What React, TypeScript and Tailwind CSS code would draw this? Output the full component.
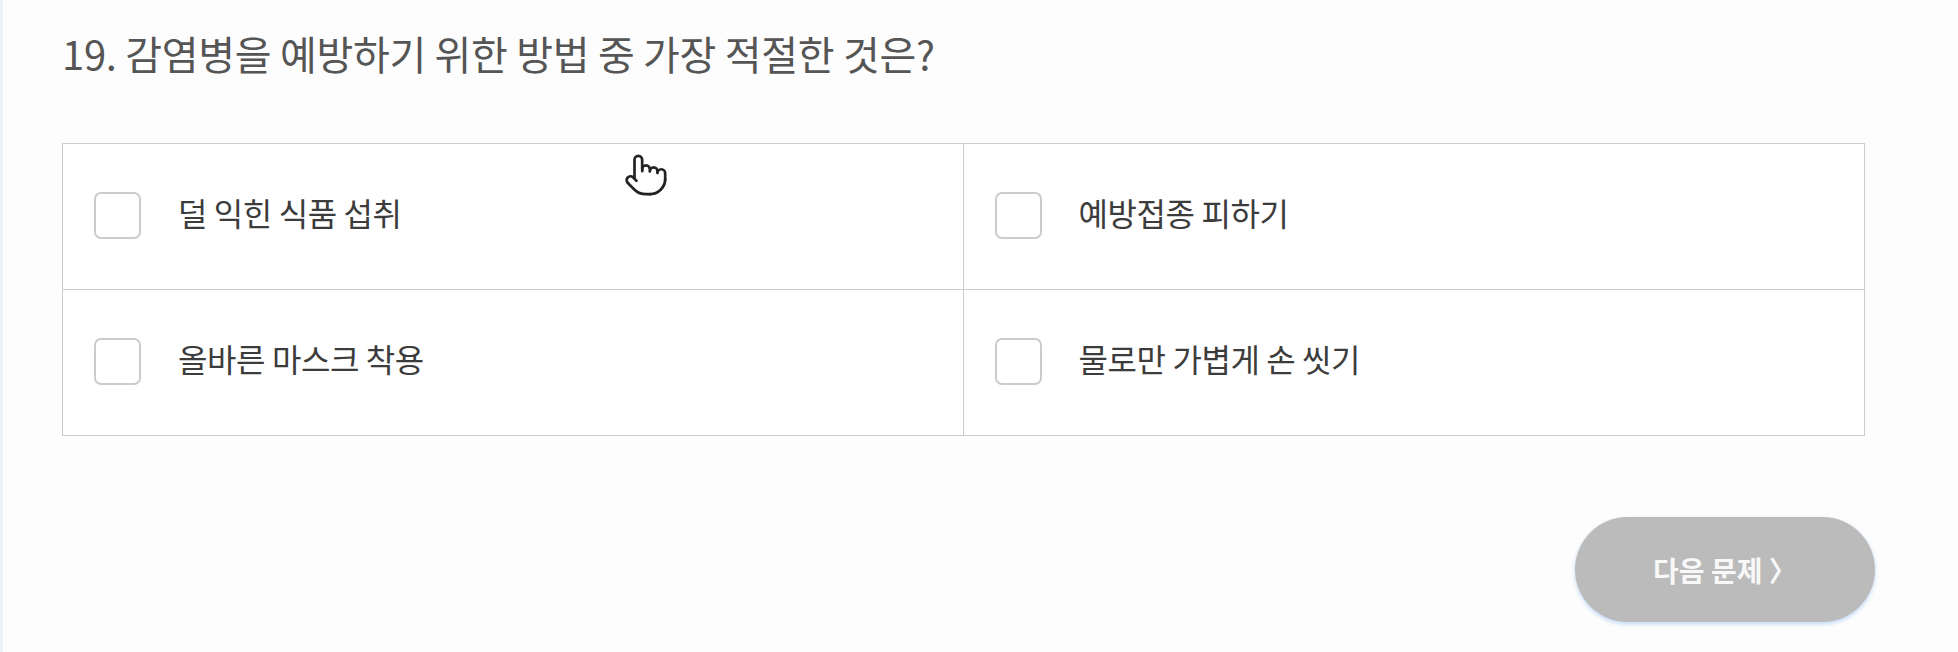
import { Pointer } from "lucide-react";

const options = [
    "덜 익힌 식품 섭취",
    "예방접종 피하기",
    "올바른 마스크 착용",
    "물로만 가볍게 손 씻기",
];

function Option({ label, index }: { label: string; index: number }) {
    const isRight = index % 2 === 1;
    const isTop = index < 2;
    return (
        <label
            className={`flex items-center cursor-pointer pl-[31px] ${isRight ? "" : "border-r border-[#cccccc]"} ${isTop ? "h-[146px] border-b border-[#cccccc]" : "h-[145px]"}`}
        >
            <span className="w-[47px] h-[47px] -mt-[2px] rounded-[7px] border-2 border-[#cccccc] bg-white shrink-0" />
            <span className="ml-[37px] -mt-[9px] text-[32px] text-[#3c3c3c] tracking-[-0.4px]">{label}</span>
        </label>
    );
}

export default function App() {
    return (
        <div
            className="relative min-h-[652px] bg-[#fdfdfd] border-l-[3px] border-[#eef3fa] pl-[59px] pr-[93px] pt-[26px]"
            style={{ fontFamily: '"Noto Sans CJK KR", "Noto Sans", sans-serif' }}
        >
            <h2 className="text-[40px] leading-[54px] text-[#555555] tracking-[-0.3px]">
                19. 감염병을 예방하기 위한 방법 중 가장 적절한 것은?
            </h2>

            <div className="mt-[63px] grid grid-cols-2 border border-[#cccccc] bg-white">
                {options.map((o, i) => (
                    <Option key={o} label={o} index={i} />
                ))}
            </div>

            <div className="flex justify-end mt-[81px]">
                <button className="w-[300px] h-[105px] -mr-[10px] rounded-full bg-[#bbbbbb] text-[#f8f8f8] text-[28px] font-bold shadow-[0_2px_4px_rgba(120,170,240,0.45)]">
                    다음 문제 〉
                </button>
            </div>

            <div className="absolute left-[620px] top-[152px] text-[#222222]">
                <Pointer size={46} strokeWidth={1.4} fill="white" />
            </div>
        </div>
    );
}
